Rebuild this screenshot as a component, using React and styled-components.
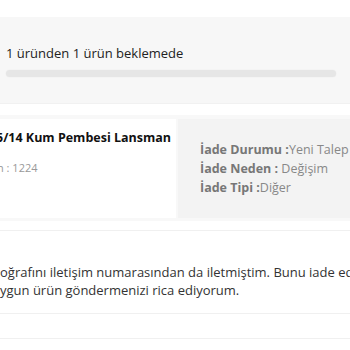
import React from "react";
import styled, { createGlobalStyle } from "styled-components";

const GlobalStyle = createGlobalStyle`
  body {
    margin: 0;
    background: #ffffff;
    overflow: hidden;
    font-family: "Open Sans", "Liberation Sans", sans-serif;
  }
`;

const Page = styled.div`
  width: 350px;
  height: 350px;
  padding-top: 17px;
  box-sizing: border-box;
  overflow: hidden;
`;

const StatusPanel = styled.div`
  background: #f7f7f7;
  padding: 27px 14px 26px 6px;
  border-bottom: 1px solid #f1f1f1;
`;

const StatusText = styled.p`
  margin: 0;
  font-size: 13px;
  line-height: 18px;
  color: #222;
`;

const Bar = styled.div`
  margin-top: 8px;
  width: 330px;
  height: 7px;
  border-radius: 4px;
  background: #e6e6e6;
  box-shadow: 0 0 2px rgba(0, 0, 0, 0.05);
`;

const Card = styled.div`
  margin-top: 11px;
  display: flex;
  gap: 2px;
  padding: 4px 0 3px 0;
  background: #f8f8f8;
`;

const Product = styled.div`
  flex: 0 0 176px;
  height: 99px;
  background: #ffffff;
  padding-top: 10px;
  box-sizing: border-box;
  overflow: hidden;
`;

const Title = styled.p`
  margin: 0 0 0 -4px;
  font-size: 12.5px;
  font-weight: 700;
  line-height: 18px;
  color: #111;
  white-space: nowrap;
`;

const Code = styled.p`
  margin: 13px 0 0 -3px;
  font-size: 11px;
  line-height: 16px;
  color: #999;
`;

const ReturnInfo = styled.div`
  flex: 1;
  background: #f3f3f3;
  padding: 21px 0 0 22px;
  overflow: hidden;
`;

const InfoRow = styled.p`
  margin: 0;
  font-size: 12.5px;
  line-height: 19px;
  color: #888;
  white-space: nowrap;

  b {
    color: #777;
    font-weight: 700;
  }
`;

const Note = styled.div`
  margin-top: 9px;
  border-top: 1px solid #f0f0f0;
  border-bottom: 1px solid #f0f0f0;
  padding: 32px 0 14px 0;
`;

const NoteText = styled.p`
  margin: 0;
  font-size: 13px;
  line-height: 18px;
  color: #333;
  white-space: nowrap;
`;

const Footer = styled.div`
  margin-top: 24px;
  border-top: 1px solid #f0f0f0;
`;

const App = () => {
  return (
    <Page>
      <GlobalStyle />
      <StatusPanel>
        <StatusText>1 üründen 1 ürün beklemede</StatusText>
        <Bar />
      </StatusPanel>
      <Card>
        <Product>
          <Title>5/14 Kum Pembesi Lansman</Title>
          <Code>n : 1224</Code>
        </Product>
        <ReturnInfo>
          <InfoRow>
            <b>İade Durumu :</b>Yeni Talep
          </InfoRow>
          <InfoRow>
            <b>İade Neden :</b> Değişim
          </InfoRow>
          <InfoRow>
            <b>İade Tipi :</b>Diğer
          </InfoRow>
        </ReturnInfo>
      </Card>
      <Note>
        <NoteText>
          oğrafını iletişim numarasından da iletmiştim. Bunu iade ediyorum
        </NoteText>
        <NoteText>ygun ürün göndermenizi rica ediyorum.</NoteText>
      </Note>
      <Footer />
    </Page>
  );
};

export default App;
